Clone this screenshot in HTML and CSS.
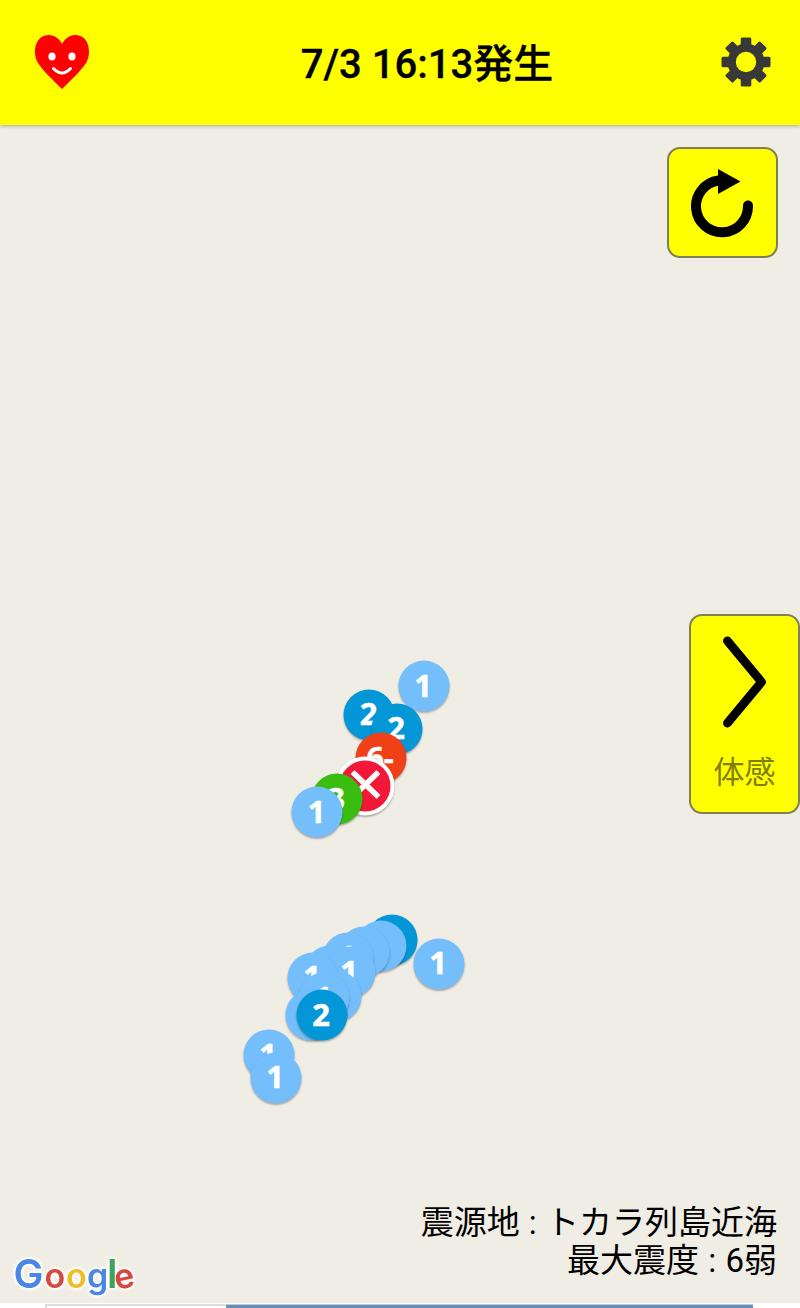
FILE: index.html
```html
<!DOCTYPE html>
<html lang="ja">
<head>
    <meta charset="UTF-8">
    <meta name="viewport" content="width=device-width, initial-scale=1.0">
    <title>7/3 16:13発生</title>
    <link rel="stylesheet" href="styles.css">
</head>
<body>

<header class="header">
    <svg class="heart" width="56" height="54" viewBox="0 0 56 54">
        <path fill="#f00" d="M28 54C20 46 9 36 4 28C-2 19 .5 0 14.500 0C21 0 25.500 4 28 9C30.500 4 35 0 41.500 0C55.500 0 58 19 52 28C47 36 36 46 28 54Z"/>
        <ellipse cx="18" cy="21.500" rx="3.600" ry="4" fill="#fff"/>
        <ellipse cx="38" cy="21.500" rx="3.600" ry="4" fill="#fff"/>
        <path d="M19.500 33.500Q28 42.500 36.500 33.500" fill="none" stroke="#fff" stroke-width="3" stroke-linecap="round"/>
    </svg>
    <h1 class="title">7/3 16:13発生</h1>
    <svg class="gear" width="50" height="50" viewBox="-25 -25 50 50" fill="#383838">
        <g id="teeth">
            <rect x="-5.300" y="-24.500" width="10.600" height="49" rx="1.500"/>
            <rect x="-24.500" y="-5.300" width="49" height="10.600" rx="1.500"/>
        </g>
        <use href="#teeth" transform="rotate(45)"/>
        <circle r="18.500"/>
        <circle r="10.200" fill="#ff0"/>
    </svg>
</header>

<main class="map">
    <div class="controls">
        <button class="btn reload">
            <svg width="66" height="70" viewBox="0 0 66 70">
                <path d="M28.500 12.500A26 26 0 1 0 58 38" fill="none" stroke="#000" stroke-width="10"/>
                <circle cx="58" cy="37.500" r="5"/>
                <path d="M28 1L50.500 13.500L28 26Z"/>
            </svg>
        </button>
        <button class="btn feel">
            <svg width="44" height="92" viewBox="0 0 44 92">
                <path d="M4.500 5L38.500 46L4.500 87" fill="none" stroke="#000" stroke-width="8.800" stroke-linecap="round" stroke-linejoin="round"/>
            </svg>
            <span>体感</span>
        </button>
    </div>

    <div id="markers"></div>

    <div class="footer">
        <svg class="logo" width="136" height="50" viewBox="0 0 136 50">
            <text y="35"><tspan x="4.500" class="g-blue cap">G</tspan><tspan x="35.500" class="g-red">o</tspan><tspan x="57" class="g-yellow">o</tspan><tspan x="78" class="g-blue">g</tspan><tspan x="98" class="g-green cap">l</tspan><tspan x="107.500" y="37" rotate="-12" class="g-red">e</tspan></text>
        </svg>
        <div class="info">
            <div>震源地 : トカラ列島近海</div>
            <div>最大震度 : 6弱</div>
        </div>
    </div>
</main>

<div class="banner"><div class="banner-left"></div><div class="banner-image"></div></div>

<script>
    // x, y, intensity, hide label (drawn in order, later ones on top)
    const points = [
        [423.5, 686, '1'], [369, 714.5, '2'], [396.5, 728.5, '2'],
        [380.5, 758, '6-'], [365, 785.5, 'x'], [336.5, 799, '3'], [317, 812, '1'],
        [392, 939.5, '2', true], [438.5, 963.5, '1'], [381, 946, '1', true], [364, 952, '1', true],
        [347.5, 957.5, '1'], [330, 971, '1', true], [349.5, 972, '1'], [312.5, 977.5, '1'],
        [336, 996, '1', true], [324, 998, '1'], [311, 1014.5, '1', true], [321.5, 1015, '2'],
        [268.5, 1055, '1'], [275.5, 1077.5, '1']
    ];
    const box = document.getElementById('markers');
    const headerHeight = 125;
    points.forEach(([x, y, level, hidden]) => {
        const el = document.createElement('div');
        el.className = 'marker level-' + level;
        el.style.left = x + 'px';
        el.style.top = (y - headerHeight) + 'px';
        if (level === 'x') {
            el.innerHTML = '<svg width="30" height="30" viewBox="0 0 30 30"><path d="M2 1.500L28 26.500M28 1.500L2 26.500" stroke="#fff" stroke-width="5.500"/></svg>';
        } else if (!hidden) {
            el.textContent = level;
        }
        box.appendChild(el);
    });
</script>

</body>
</html>
```
FILE: styles.css
```css
body {
    margin: 0;
    height: 1308px;
    display: flex;
    flex-direction: column;
    overflow: hidden;
    font-family: Roboto, "Noto Sans CJK JP", sans-serif;
    background-color: #f0ede5;
}
.header {
    height: 125px;
    padding: 0 29px 2px 34px;
    box-sizing: border-box;
    display: flex;
    align-items: center;
    justify-content: space-between;
    background-color: #ff0;
    box-shadow: 0 1px 4px rgba(0, 0, 0, 0.3);
    z-index: 1;
}
.title {
    margin: 6px 0 0 43px;
    font-size: 40px;
    font-weight: 500;
    line-height: 60px;
    -webkit-text-stroke: 0.3px #000;
}
.map {
    position: relative;
    flex: 1;
    display: flex;
    flex-direction: column;
    justify-content: space-between;
}
.controls {
    display: flex;
    flex-direction: column;
    align-items: flex-end;
    padding-top: 22px;
}
.btn {
    box-sizing: border-box;
    padding: 0;
    border: 2px solid #807e58;
    border-radius: 13px;
    background-color: #ff0;
    font-family: inherit;
}
.reload {
    width: 111px;
    height: 111px;
    margin-right: 22px;
}
.reload svg {
    display: block;
    margin: 0 auto;
}
.feel {
    display: flex;
    flex-direction: column;
    align-items: center;
    width: 111px;
    height: 200px;
    margin-top: 356px;
    padding-top: 20px;
}
.feel span {
    margin-top: 22px;
    font-size: 31px;
    line-height: 46px;
    color: #808000;
}
.marker {
    position: absolute;
    display: flex;
    align-items: center;
    justify-content: center;
    width: 51px;
    height: 51px;
    border-radius: 50%;
    transform: translate(-50%, -50%);
    box-shadow: 0 1.5px 2px rgba(0, 0, 0, 0.3);
    color: #fff;
    font: bold 31px/48px "Open Sans", sans-serif;
    -webkit-text-stroke: 0.5px #fff;
}
.marker:not(.level-x) {
    box-sizing: border-box;
    padding: 0 1px 4px 0;
}
.level-1 {
    background-color: #74befb;
}
.level-2 {
    background-color: #0497d7;
}
.level-3 {
    background-color: #38bd10;
}
.level-6- {
    background-color: #f04018;
}
.level-x {
    border: 4px solid #fff;
    background-color: #f21838;
}
.footer {
    display: flex;
    align-items: flex-end;
    justify-content: space-between;
    padding: 0 23px 0 9px;
}
.logo {
    overflow: visible;
    filter: drop-shadow(0 0 1.5px #fff) drop-shadow(0 0 1px #fff) drop-shadow(0 0 1px #fff);
}
.logo text {
    font-family: Inter, sans-serif;
    font-size: 34px;
    font-weight: 600;
}
.logo .cap {
    font-size: 40px;
}
.g-blue {
    fill: #4a86e4;
}
.g-red {
    fill: #d94840;
}
.g-yellow {
    fill: #efbd26;
}
.g-green {
    fill: #3fa45b;
}
.info {
    margin-bottom: 23px;
    font-size: 33px;
    line-height: 38px;
    text-align: right;
    word-spacing: 1px;
}
.banner {
    display: flex;
    height: 5px;
    padding: 0 47px 0 45px;
    background-color: #fff;
}
.banner-left {
    width: 181px;
    box-sizing: border-box;
    margin-top: 1px;
    border-top: 2px solid #dcdcda;
    border-left: 2px solid #dcdcda;
}
.banner-image {
    flex: 1;
    margin-top: 1px;
    border-top: 1px solid #b4cbdc;
    background-color: #6b8bb8;
}
```
